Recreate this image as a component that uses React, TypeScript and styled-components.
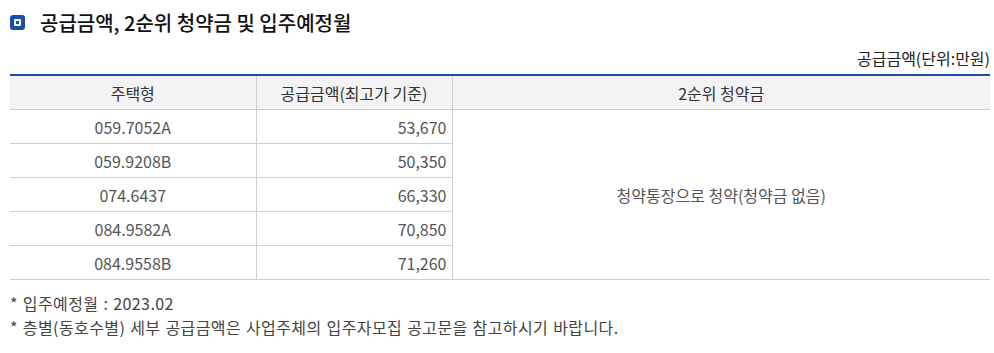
import React from 'react';
import styled, { createGlobalStyle } from 'styled-components';

const GlobalStyle = createGlobalStyle`
  body {
    margin: 0;
    background: #fff;
    font-family: 'Noto Sans CJK KR', 'Noto Sans', sans-serif;
    color: #333;
  }
`;

const rows: [string, string][] = [
  ['059.7052A', '53,670'],
  ['059.9208B', '50,350'],
  ['074.6437', '66,330'],
  ['084.9582A', '70,850'],
  ['084.9558B', '71,260']
];

const Section = styled.section`
  padding: 8px 4px 0 10px;
`;

const Title = styled.h2`
  display: flex;
  align-items: center;
  gap: 15px;
  margin: 0;
  height: 28px;
  font-size: 20px;
  font-weight: 500;
  color: #111;
`;

const Bullet = styled.span`
  flex: none;
  width: 15px;
  height: 15px;
  border-radius: 3px;
  background: #1a4ea8;
  display: flex;
  align-items: center;
  justify-content: center;
  &::after {
    content: '';
    width: 3px;
    height: 3px;
    border: 2px solid #fff;
    border-radius: 1px;
  }
`;

const Unit = styled.div`
  text-align: right;
  font-size: 16px;
  color: #222;
  margin-top: 9px;
  height: 29px;
  line-height: 26px;
`;

const Table = styled.table`
  width: 980px;
  border-collapse: collapse;
  border-top: 2px solid #1a4ea8;
  border-bottom: 1px solid #cfcfcf;
  table-layout: fixed;
  font-size: 16px;
  color: #555;
`;

const Th = styled.th`
  height: 33px;
  padding: 0;
  background: #f3f3f3;
  font-weight: 400;
  color: #333;
  border-bottom: 1px solid #cfcfcf;
  border-left: 1px solid #cfcfcf;
  &:first-child {
    border-left: none;
  }
`;

const Td = styled.td<{ $align?: 'left' | 'right' | 'center' }>`
  height: 33px;
  padding: 0 ${p => (p.$align === 'right' ? '5px' : '0')};
  text-align: ${p => p.$align || 'center'};
  border-bottom: 1px solid #cfcfcf;
  border-left: 1px solid #cfcfcf;
  &:first-child {
    border-left: none;
  }
`;

const Notes = styled.ul`
  list-style: none;
  margin: 11px 0 0;
  padding: 0;
  font-size: 16px;
  color: #444;
  line-height: 24px;
  letter-spacing: 0.4px;
  word-spacing: 1px;
`;

export default function App() {
  return (
    <>
      <GlobalStyle />
      <Section>
        <Title>
          <Bullet />
          공급금액, 2순위 청약금 및 입주예정월
        </Title>
        <Unit>공급금액(단위:만원)</Unit>
        <Table>
          <colgroup>
            <col style={{ width: 246 }} />
            <col style={{ width: 196 }} />
            <col />
          </colgroup>
          <thead>
            <tr>
              <Th>주택형</Th>
              <Th>공급금액(최고가 기준)</Th>
              <Th>2순위 청약금</Th>
            </tr>
          </thead>
          <tbody>
            {rows.map(([type, price], i) => (
              <tr key={type}>
                <Td>{type}</Td>
                <Td $align="right">{price}</Td>
                {i === 0 && <Td rowSpan={rows.length}>청약통장으로 청약(청약금 없음)</Td>}
              </tr>
            ))}
          </tbody>
        </Table>
        <Notes>
          <li>* 입주예정월 : 2023.02</li>
          <li>* 층별(동호수별) 세부 공급금액은 사업주체의 입주자모집 공고문을 참고하시기 바랍니다.</li>
        </Notes>
      </Section>
    </>
  );
}
